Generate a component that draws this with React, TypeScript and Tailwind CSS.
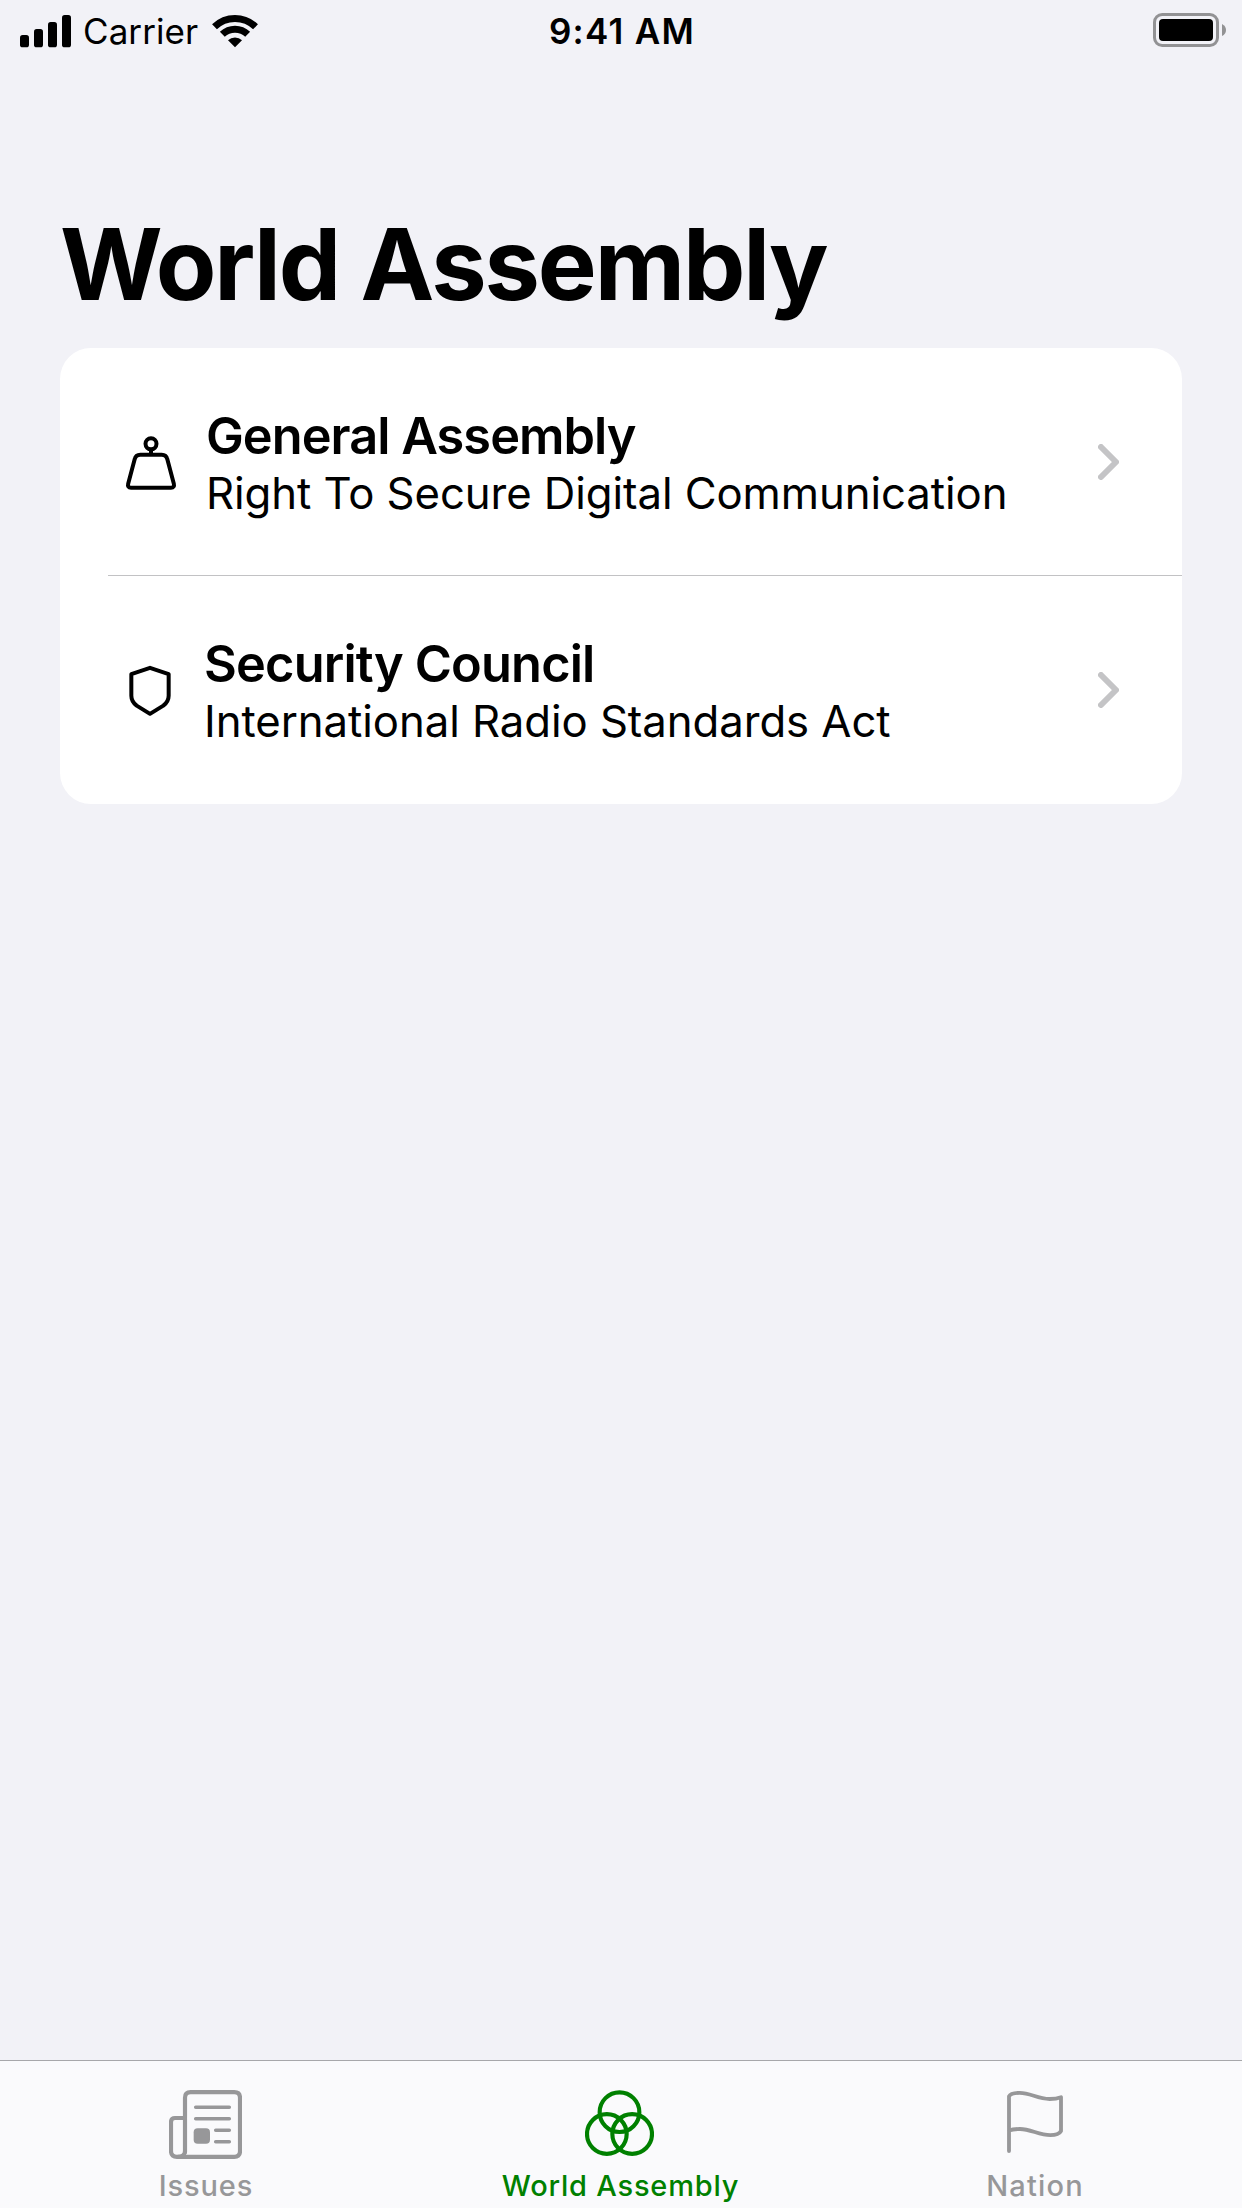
import React from 'react';

function SignalIcon() {
  return (
    <svg className="ml-5 block h-[33px] w-[51px]" viewBox="60 41 153 99" fill="#000">
      <rect x="60" y="101" width="27" height="37" rx="8" />
      <rect x="102" y="83" width="27" height="55" rx="8" />
      <rect x="144" y="62" width="27" height="76" rx="8" />
      <rect x="186" y="41" width="27" height="97" rx="8" />
    </svg>
  );
}

function WifiIcon() {
  return (
    <svg className="block h-[34px] w-[46px]" viewBox="636 38 138 102" fill="none" stroke="#000">
      <path d="M643.5 76.5 A88.5 88.5 0 0 1 766.5 76.5" strokeWidth="21" />
      <path d="M667 99 A54.5 54.5 0 0 1 743 99" strokeWidth="21" />
      <path d="M705 138 L684 117 A30 30 0 0 1 726 117 Z" fill="#000" stroke="none" />
    </svg>
  );
}

function BatteryIcon() {
  return (
    <svg className="block h-[34px] w-[73px]" viewBox="69 39 219 102">
      <rect x="73.5" y="43.5" width="189" height="93" rx="23" fill="none" stroke="#929294" strokeWidth="9" />
      <rect x="87" y="57" width="162" height="66" rx="12" fill="#000" />
      <path d="M276 72 Q288 78 288 90 Q288 102 276 108 Z" fill="#929294" />
    </svg>
  );
}

function WeightIcon() {
  return (
    <svg className="block h-[54px] w-[52px]" viewBox="75 106 156 162" fill="none" stroke="#000" strokeWidth="12" strokeLinejoin="round">
      <circle cx="153" cy="129.5" r="16.5" />
      <path d="M153 146 V161" />
      <path d="M121 162.5 H185 Q199 162.5 202 176 L221.5 249 Q224.5 261 213 261 H93 Q81.5 261 84.5 249 L104 176 Q107 162.5 121 162.5 Z" />
    </svg>
  );
}

function ShieldIcon() {
  return (
    <svg className="block h-[52px] w-[44px]" viewBox="83 105 132 156" fill="none" stroke="#000" strokeWidth="12" strokeLinejoin="round">
      <path d="M149 113.5 L205 132.5 V197 Q205 214 189 227 L149 251.5 L109 227 Q93 214 93 197 V132.5 Z" />
    </svg>
  );
}

function Chevron() {
  return (
    <svg className="block h-9 w-[21px]" viewBox="0 0 21 36" fill="none" stroke="#c4c4c6" strokeWidth="6" strokeLinecap="round" strokeLinejoin="round">
      <path d="M3 3 L18 18 L3 33" />
    </svg>
  );
}

function NewspaperIcon() {
  return (
    <svg className="block h-[69px] w-[73px]" viewBox="87 120 219 207" fill="none" stroke="#979799" strokeLinecap="round">
      <path d="M135 307 V143 Q135 126.5 152 126.5 H283 Q300 126.5 300 143 V304 Q300 320.5 283 320.5 H111 Q93 320.5 93 303 V216 Q93 204 105 204 H135" strokeWidth="12.5" />
      <path d="M135 303 Q135 320 114 320" strokeWidth="12" />
      <path d="M167 172 H268 M167 206 H268 M227 240.5 H268 M227 275.5 H268" strokeWidth="10.5" />
      <rect x="161" y="235" width="49" height="46" rx="12" fill="#979799" stroke="none" />
    </svg>
  );
}

function CirclesIcon() {
  return (
    <svg className="block h-[66px] w-[69px]" viewBox="285 120 207 198" fill="none" stroke="#008000" strokeWidth="12.5">
      <circle cx="388.5" cy="186.5" r="59.5" />
      <circle cx="350.5" cy="252" r="59.5" />
      <circle cx="426.5" cy="252" r="59.5" />
    </svg>
  );
}

function FlagIcon() {
  return (
    <svg className="block h-[63px] w-[56px]" viewBox="144 120 168 189" fill="none" stroke="#979799" strokeWidth="11.5" strokeLinecap="round" strokeLinejoin="round">
      <path d="M150 303 V139 Q155 128.5 182 128.5 C215 128.5 235 147 272 147 Q292 147 306 141.5 V243 Q299 255.5 274 255.5 C240 255.5 215 237 183 237 Q162 237 150 241.5" />
    </svg>
  );
}

export default function App() {
  return (
    <div className="flex h-[2208px] w-[1242px] flex-col overflow-hidden bg-[#f2f2f7] font-['Inter',sans-serif] whitespace-nowrap text-black">
      <header className="grid h-[62px] grid-cols-3 items-center text-[35px] leading-[62px]">
        <div className="flex items-center">
          <SignalIcon />
          <span className="ml-3 tracking-[0.075px]">Carrier</span>
          <span className="mb-px ml-[14px]">
            <WifiIcon />
          </span>
        </div>
        <div className="pl-[2px] text-center font-[560] tracking-[1.3px]">9:41 AM</div>
        <div className="flex justify-end pr-4 pb-[2px]">
          <BatteryIcon />
        </div>
      </header>

      <main className="flex-1 px-[60px] pt-[142px]">
        <h1 className="text-[99px] leading-[120px] font-bold tracking-[-2.1px]">World Assembly</h1>
        <ul className="mt-6 overflow-hidden rounded-[31px] bg-white">
          <li className="flex h-[228px]">
            <div className="flex w-[146px] items-center pt-[2px] pl-[65px]">
              <WeightIcon />
            </div>
            <div className="flex-1 pt-[58px]">
              <div className="text-[50.5px] leading-[60px] font-semibold tracking-[-0.97px]">General Assembly</div>
              <div className="pt-px text-[43.7px] leading-[54px] tracking-[-0.07px]">Right To Secure Digital Communication</div>
            </div>
            <div className="flex items-center pr-[63px]">
              <Chevron />
            </div>
          </li>
          <li className="-mt-px ml-12 h-px bg-[#c2c2c4]" />
          <li className="flex h-[228px]">
            <div className="flex w-[144px] items-center pt-[2px] pl-[68px]">
              <ShieldIcon />
            </div>
            <div className="flex-1 pt-[58px]">
              <div className="text-[50.5px] leading-[60px] font-semibold tracking-[-0.83px]">Security Council</div>
              <div className="pt-px text-[43.7px] leading-[54px] tracking-[-0.05px]">International Radio Standards Act</div>
            </div>
            <div className="flex items-center pr-[63px]">
              <Chevron />
            </div>
          </li>
        </ul>
      </main>

      <nav className="grid h-[148px] grid-cols-3 border-t border-[#a7a7aa] bg-[#fafafc] text-[29px] leading-9 font-medium text-[#979799]">
        <div className="flex flex-col items-center pt-[29px]">
          <div className="mr-[3px] h-[78px]">
            <NewspaperIcon />
          </div>
          <span className="mr-[2px] tracking-[0.88px]">Issues</span>
        </div>
        <div className="flex flex-col items-center pt-[29px] text-[#008000]">
          <div className="mr-[3px] h-[78px]">
            <CirclesIcon />
          </div>
          <span className="mr-px tracking-[0.8px]">World Assembly</span>
        </div>
        <div className="flex flex-col items-center pt-[29px]">
          <div className="h-[78px]">
            <FlagIcon />
          </div>
          <span className="tracking-[1.18px]">Nation</span>
        </div>
      </nav>
    </div>
  );
}
